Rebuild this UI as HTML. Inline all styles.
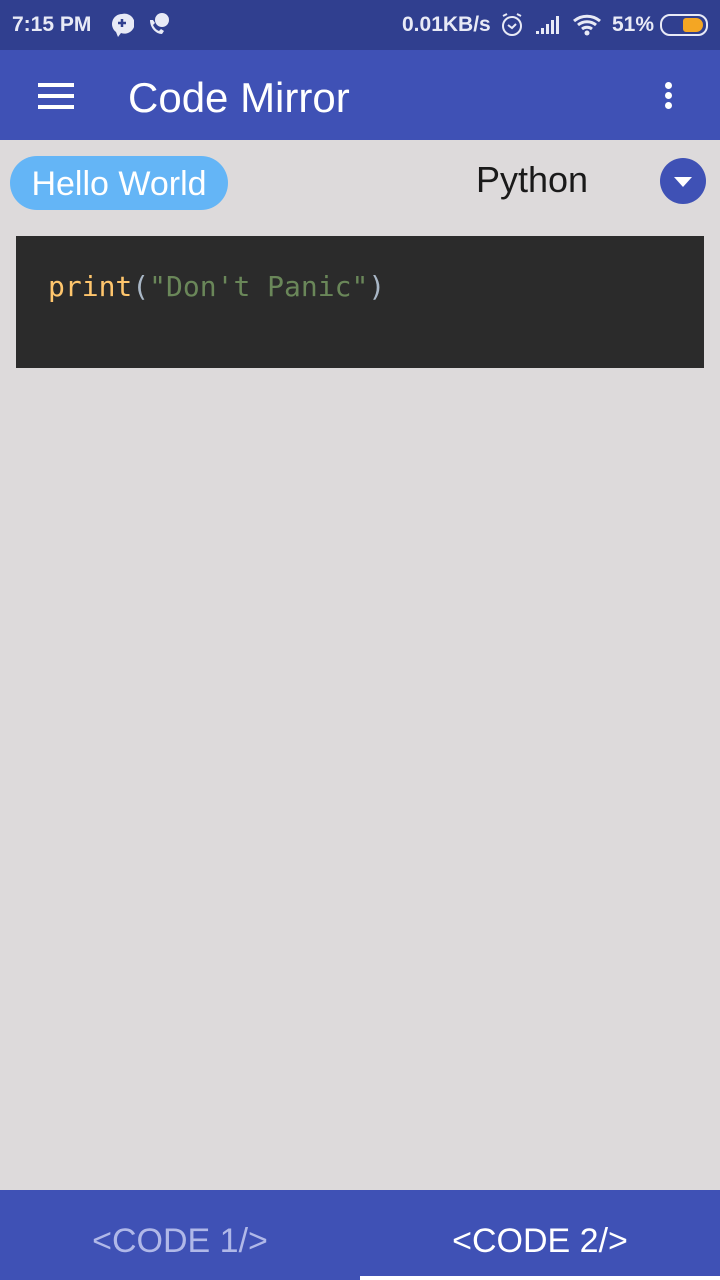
<!DOCTYPE html>
<html><head><style>
body{margin:0;width:720px;height:1280px;background:#dddadb;font-family:"Liberation Sans",sans-serif;position:relative;overflow:hidden}
.sb{position:absolute;top:0;left:0;width:720px;height:50px;background:#303f8f;color:#e8eaf6;font-weight:bold;font-size:21px}
.ab{position:absolute;top:50px;left:0;width:720px;height:90px;background:#3f51b5;color:#fff}
.bb{position:absolute;top:1190px;left:0;width:720px;height:90px;background:#3f51b5}
</style></head><body>
<div class="sb">
<span style="position:absolute;left:12px;top:13px">7:15 PM</span>
<svg style="position:absolute;left:110px;top:12px" width="24" height="26"><path d="M12 2a10 10 0 0 0-6 18l2 5 3-4a10 10 0 1 0 1-19z" fill="#e8eaf6"/><path d="M12 7v8M8 11h8" stroke="#303f8f" stroke-width="2.5"/></svg>
<svg style="position:absolute;left:146px;top:12px" width="26" height="26"><circle cx="16" cy="8" r="7" fill="#e8eaf6"/><path d="M4 8c0 8 6 14 12 14l2-3-3-2-2 2c-3-1-5-4-6-6l2-2-2-3z" fill="#e8eaf6"/></svg>
<span style="position:absolute;left:402px;top:13px">0.01KB/s</span>
<svg style="position:absolute;left:500px;top:12px" width="24" height="26"><circle cx="12" cy="14" r="9" stroke="#e8eaf6" stroke-width="2" fill="none"/><path d="M8 13l4 3 4-4M3 4l4-2M21 4l-4-2" stroke="#e8eaf6" stroke-width="2" fill="none"/></svg>
<svg style="position:absolute;left:534px;top:14px" width="28" height="22"><path d="M2 20h3v-3H2zM7 20h3v-6H7zM12 20h3V10h-3zM17 20h3V6h-3zM22 20h3V2h-3z" fill="#e8eaf6"/></svg>
<svg style="position:absolute;left:572px;top:12px" width="32" height="26"><path d="M2 9a20 20 0 0 1 26 0M6 13a14 14 0 0 1 18 0M10 17a8 8 0 0 1 10 0" stroke="#e8eaf6" stroke-width="3" fill="none"/><circle cx="15" cy="21" r="2.5" fill="#e8eaf6"/></svg>
<span style="position:absolute;left:612px;top:13px">51%</span>
<div style="position:absolute;left:660px;top:14px;width:44px;height:18px;border:2px solid #e8eaf6;border-radius:10px"></div>
<div style="position:absolute;left:683px;top:18px;width:20px;height:14px;background:#f4a623;border-radius:3px 7px 7px 3px"></div>
</div>
<div class="ab">
<div style="position:absolute;left:38px;top:33px;width:36px;height:4px;background:#fff;box-shadow:0 11px 0 #fff,0 22px 0 #fff"></div>
<span style="position:absolute;left:128px;top:24px;font-size:42px">Code Mirror</span>
<div style="position:absolute;left:665px;top:32px;width:7px;height:7px;border-radius:50%;background:#fff;box-shadow:0 10px 0 #fff,0 20px 0 #fff"></div>
</div>
<div style="position:absolute;left:10px;top:156px;width:218px;height:54px;background:#64b5f6;border-radius:27px;color:#fff;font-size:34px;line-height:56px;text-align:center">Hello World</div>
<div style="position:absolute;left:476px;top:159px;font-size:36px;color:#1a1a1a">Python</div>
<div style="position:absolute;left:660px;top:158px;width:46px;height:46px;border-radius:50%;background:#3f51b5"></div>
<div style="position:absolute;left:674px;top:177px;width:0;height:0;border-left:9px solid transparent;border-right:9px solid transparent;border-top:10px solid #fff"></div>
<div style="position:absolute;left:16px;top:236px;width:688px;height:132px;background:#2b2b2b"></div>
<div style="position:absolute;left:48px;top:270px;font-family:'DejaVu Sans Mono',monospace;font-size:28px;color:#a9b7c6;white-space:pre"><span style="color:#ffc66d">print</span>(<span style="color:#6a8759">"Don't Panic"</span>)</div>
<div class="bb">
<span style="position:absolute;left:0;width:360px;top:32px;text-align:center;font-size:34px;color:#b0b8e8">&lt;CODE 1/&gt;</span>
<span style="position:absolute;left:360px;width:360px;top:32px;text-align:center;font-size:34px;color:#fff">&lt;CODE 2/&gt;</span>
<div style="position:absolute;left:360px;top:86px;width:360px;height:4px;background:#fff"></div>
</div>
</body></html>
